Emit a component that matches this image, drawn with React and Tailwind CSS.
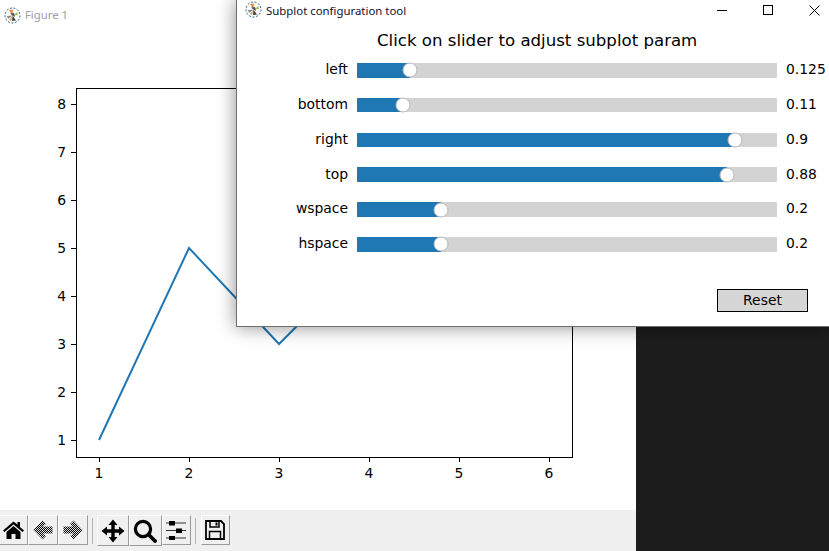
import React from 'react'

// slider params as shown in the config dialog
const params = [
  { name: 'left', value: 0.125 },
  { name: 'bottom', value: 0.11 },
  { name: 'right', value: 0.9 },
  { name: 'top', value: 0.88 },
  { name: 'wspace', value: 0.2 },
  { name: 'hspace', value: 0.2 },
]

const xTicks = [[1, 99], [2, 189], [3, 279], [4, 369], [5, 459], [6, 549]]
const yTicks = [[1, 440], [2, 392], [3, 344], [4, 296], [5, 248], [6, 200], [7, 152], [8, 104]]

const Logo = () => (
  <svg width="17" height="17" viewBox="0 0 17 17" className="shrink-0">
    <circle cx="8.5" cy="8.5" r="7.5" fill="#fff" stroke="#1f5f8b" strokeWidth="1" strokeDasharray="2 1.6" />
    <path d="M8.5 8.5 L5 3 L9 2.5 Z" fill="#f08a3a" />
    <path d="M8.5 8.5 L13.5 5 L14 8 Z" fill="#a8c850" />
    <path d="M8.5 8.5 L3 9 L4 12 Z" fill="#8a8a8a" />
    <path d="M8.5 8.5 L12 13.5 L8 14 Z" fill="#444" />
    <path d="M8.5 8.5 L6 6.5 L10 6 L11 10 Z" fill="#555" />
    <path d="M8.5 8.5 L5 13 L7 14 Z" fill="#d9a05a" />
  </svg>
)

const ToolButton = ({ width, children, className = 'h-[30px]' }) => (
  <div
    className={`flex items-center justify-center bg-[#f0f0f0] border-t border-l border-t-white border-l-white border-r border-b border-r-[#9a9a9a] border-b-[#9a9a9a] ${width} ${className}`}
  >
    {children}
  </div>
)

const Separator = () => <div className="w-px h-[26px] mt-[3px] bg-[#b5b5b5] mx-[4px]" />

const Dither = ({ id }) => (
  <pattern id={id} width="2" height="2" patternUnits="userSpaceOnUse">
    <rect width="2" height="2" fill="#dcdcdc" />
    <rect width="1" height="1" fill="#000" />
    <rect x="1" y="1" width="1" height="1" fill="#000" />
  </pattern>
)

const Toolbar = () => (
  <div className="h-[41px] bg-[#f0f0f0] flex items-start pt-[5px] ml-[-2px]">
    <ToolButton width="w-[30px]">
      <svg width="21" height="18" viewBox="0 0 21 18" className="ml-[1px]">
        <path d="M10.5 0.5 L0 9.5 L1.5 11 L10.5 3.5 L19.5 11 L21 9.5 L17 6 V1 H14.5 V3.5 Z" fill="#000" />
        <path d="M3.5 11 L10.5 5 L17.5 11 V18 H12.5 V13 H8.5 V18 H3.5 Z" fill="#000" />
      </svg>
    </ToolButton>
    <ToolButton width="w-[30px]">
      <svg width="20" height="20" viewBox="0 0 20 20">
        <defs><Dither id="backFill" /></defs>
        <path d="M9.5 0.5 L0.5 10 L9.5 19.5 L13 16 L9.5 13.5 H19.5 V6.5 H9.5 L13 4 Z" fill="url(#backFill)" />
      </svg>
    </ToolButton>
    <ToolButton width="w-[30px]">
      <svg width="20" height="20" viewBox="0 0 20 20">
        <defs><Dither id="forwardFill" /></defs>
        <path d="M10.5 0.5 L19.5 10 L10.5 19.5 L7 16 L10.5 13.5 H0.5 V6.5 H10.5 L7 4 Z" fill="url(#forwardFill)" />
      </svg>
    </ToolButton>
    <Separator />
    <ToolButton width="w-[32px]" className="h-[31px]">
      <svg width="24" height="24" viewBox="0 0 24 24">
        <path d="M12 0.5 L16.5 6 H13.7 V10.3 H18 V7.5 L23.5 12 L18 16.5 V13.7 H13.7 V18 H16.5 L12 23.5 L7.5 18 H10.3 V13.7 H6 V16.5 L0.5 12 L6 7.5 V10.3 H10.3 V6 H7.5 Z" fill="#000" />
      </svg>
    </ToolButton>
    <ToolButton width="w-[33px]" className="h-[31px] pr-[2px]">
      <svg width="24" height="24" viewBox="0 0 24 24">
        <circle cx="10" cy="10" r="7.6" fill="none" stroke="#000" strokeWidth="3.2" />
        <path d="M15.5 15.5 L22 22" stroke="#000" strokeWidth="3.8" strokeLinecap="round" />
      </svg>
    </ToolButton>
    <ToolButton width="w-[29px]" className="h-[30px] pr-[2px]">
      <svg width="20" height="20" viewBox="0 0 20 20">
        <path d="M0 3 H20 M0 10.5 H20 M0 18 H20" stroke="#333" strokeWidth="1" />
        <rect x="3" y="1" width="6" height="4.5" fill="#000" />
        <rect x="10" y="8.5" width="6" height="4.5" fill="#000" />
        <rect x="3" y="16" width="6" height="4" fill="#000" />
      </svg>
    </ToolButton>
    <Separator />
    <ToolButton width="w-[29px]" className="h-[30px] ml-[1px] pr-[1px]">
      <svg width="20" height="20" viewBox="0 0 20 20">
        <path d="M1 1 H16 L19 4 V19 H1 Z" fill="none" stroke="#000" strokeWidth="1.8" />
        <path d="M5 1.5 V7 H14 V1.5" fill="none" stroke="#000" strokeWidth="1.5" />
        <rect x="10.5" y="2.5" width="2" height="3" fill="#000" />
        <path d="M4.5 18.5 V11.5 H15.5 V18.5" fill="none" stroke="#000" strokeWidth="1.5" />
      </svg>
    </ToolButton>
  </div>
)

const Chart = () => (
  <svg width="636" height="480" viewBox="0 30 636 480" className="block">
    <polyline points="99,440 189,248 279,344 369,254" fill="none" stroke="#1f77b4" strokeWidth="2" />
    <rect x="76.5" y="88.5" width="496" height="369" fill="none" stroke="#000" strokeWidth="1" />
    {xTicks.map(([n, x]) => (
      <g key={n}>
        <line x1={x + 0.5} x2={x + 0.5} y1="457" y2="462" stroke="#000" />
        <text x={x} y="478" textAnchor="middle" fontSize="13.9" fontFamily="DejaVu Sans" fill="#000">{n}</text>
      </g>
    ))}
    {yTicks.map(([n, y]) => (
      <g key={n}>
        <line x1="71" x2="76" y1={y + 0.5} y2={y + 0.5} stroke="#000" />
        <text x="66" y={y + 5} textAnchor="end" fontSize="13.9" fontFamily="DejaVu Sans" fill="#000">{n}</text>
      </g>
    ))}
  </svg>
)

const SliderRow = ({ name, value }) => (
  <div className="h-[34.8px] flex items-center">
    <div className="w-[111px] pb-[1.5px] text-right text-[#000]">{name}</div>
    <div className="relative w-[420px] h-[14.6px] ml-[9px] bg-[#d3d3d3]">
      <div className="h-full bg-[#1f77b4]" style={{ width: `${value * 100}%` }} />
      <div
        className="absolute top-1/2 w-[15px] h-[15px] -translate-x-1/2 -translate-y-1/2 rounded-full bg-white border border-[#b8b8b8]"
        style={{ left: `${value * 100}%` }}
      />
    </div>
    <div className="ml-[9px] pb-[1.5px]">{value}</div>
  </div>
)

const ConfigDialog = () => (
  <div className="absolute left-[236px] top-0 w-[593px] h-[327px] bg-white border-l border-b border-[#6e6e6e] shadow-[0_0_18px_rgba(0,0,0,0.45)] font-['DejaVu_Sans',sans-serif] text-[13.9px]">
    <div className="h-5 flex items-center relative">
      <div className="ml-[8px] flex items-center gap-[4px] font-['Noto_Sans',sans-serif] text-[11.4px] text-[#101030]">
        <Logo />
        <span className="pt-[1px]">Subplot configuration tool</span>
      </div>
      <div className="ml-auto mr-[-8px] flex items-center">
        <div className="w-[46px] flex justify-center"><div className="w-[10px] h-px bg-black" /></div>
        <div className="w-[46px] flex justify-center"><div className="w-[10px] h-[10px] border border-black" /></div>
        <div className="w-[46px] flex justify-center">
          <svg width="11" height="11" viewBox="0 0 11 11"><path d="M0.5 0.5 L10.5 10.5 M10.5 0.5 L0.5 10.5" stroke="#000" /></svg>
        </div>
      </div>
    </div>
    <div className="h-[33px] pt-[9px] pl-[140px] text-[16.6px] leading-[24px] whitespace-nowrap">
      Click on slider to adjust subplot param
    </div>
    {params.map((p) => <SliderRow key={p.name} {...p} />)}
    <div className="flex justify-end pr-[21px] mt-[27px]">
      <div className="w-[91px] h-[23px] bg-[#d6d6d6] border border-black flex items-center justify-center">Reset</div>
    </div>
  </div>
)

export default function App() {
  return (
    <div className="relative w-[829px] h-[551px] overflow-hidden bg-[#1c1c1c]">
      <div className="w-[636px] h-full bg-white flex flex-col">
        <div className="h-[30px] flex items-center pl-[4px] gap-[4px] font-['Noto_Sans',sans-serif] text-[11.3px] text-[#a39ba3]">
          <Logo />
          <span>Figure 1</span>
        </div>
        <Chart />
        <Toolbar />
      </div>
      <ConfigDialog />
    </div>
  )
}
